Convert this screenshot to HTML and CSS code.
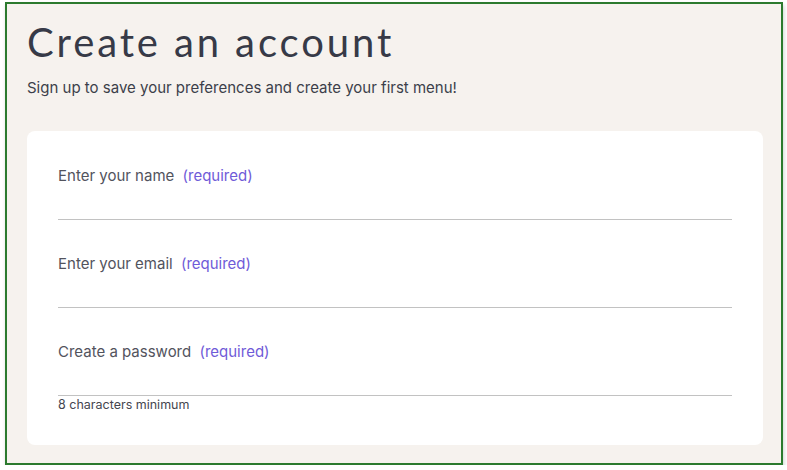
FILE: index.html
```html
<!DOCTYPE html>
<html lang="en">
<head>
<meta charset="utf-8">
<title>Create an account</title>
<link rel="stylesheet" href="styles.css">
</head>
<body>
<div class="frame">
  <h1 class="title">Create an account</h1>
  <p class="subtitle">Sign up to save your preferences and create your first menu!</p>
  <form class="card">
    <div class="field">
      <label class="label">Enter your name <span class="req">(required)</span></label>
      <div class="line"></div>
    </div>
    <div class="field">
      <label class="label">Enter your email <span class="req">(required)</span></label>
      <div class="line"></div>
    </div>
    <div class="field">
      <label class="label">Create a password <span class="req">(required)</span></label>
      <div class="line"></div>
      <div class="hint">8 characters minimum</div>
    </div>
  </form>
</div>
</body>
</html>
```
FILE: styles.css
```css
html, body { margin: 0; padding: 0; background: #ffffff; }
body { font-family: "Inter", "Liberation Sans", sans-serif; }
.frame {
  margin: 2px 4px 0 5px;
  height: 463px;
  box-sizing: border-box;
  border: 2px solid #2c7a2e;
  background: #f6f2ee;
  padding: 16px 18px 0 20px;
  box-shadow: 1px 3px 4px rgba(0,0,0,0.18);
}
.title {
  margin: 0;
  font-family: "Lato", sans-serif;
  font-weight: 400;
  font-size: 40px;
  line-height: 44px;
  color: #373a47;
  letter-spacing: 2.9px;
}
.subtitle {
  margin: 15px 0 0 0;
  font-size: 15px;
  line-height: 18px;
  color: #3c3f4a;
}
.card {
  margin-top: 34px;
  background: #ffffff;
  border-radius: 8px;
  height: 314px;
  padding: 36px 31px 0 31px;
  box-sizing: border-box;
}
.field { height: 88px; }
.label {
  display: block;
  font-size: 15px;
  line-height: 18px;
  color: #52535d;
}
.req { color: #6f5bd8; margin-left: 4px; }
.line {
  margin-top: 34px;
  height: 1px;
  background: #c2c2c2;
}
.hint {
  margin-top: 1px;
  font-size: 12.5px;
  line-height: 15px;
  color: #45464f;
}
```
